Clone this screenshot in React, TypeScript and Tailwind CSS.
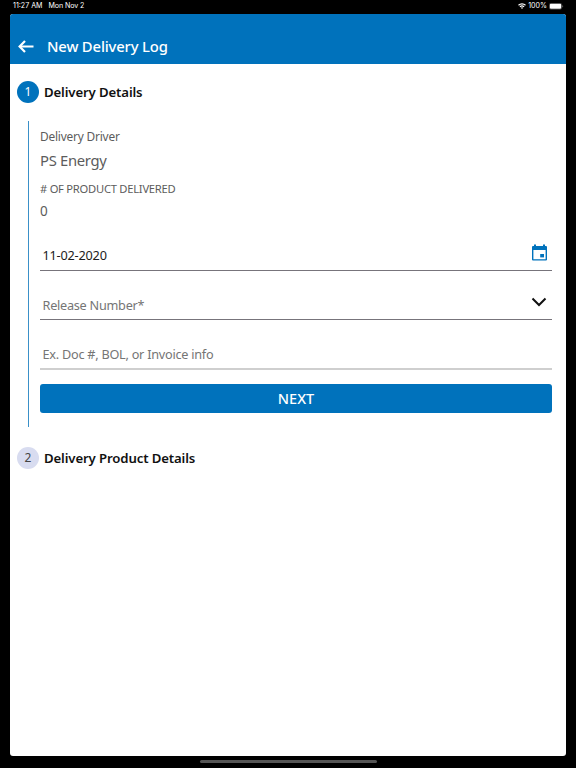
import React from 'react';

function StatusBar() {
  return (
    <div className="flex h-[14px] items-start justify-between pl-[13px] pr-[12px] pt-[1px] font-['Inter','Liberation_Sans',sans-serif] text-[7.1px] leading-[10px] text-white">
      <div className="flex gap-[6px]">
        <span>11:27 AM</span>
        <span className="tracking-[-0.1px]">Mon Nov 2</span>
      </div>
      <div className="flex items-center">
        <svg width="8" height="6" viewBox="0 0 16 12" fill="none" stroke="white" strokeWidth="2.3">
          <path d="M1 4.5a10 10 0 0 1 14 0" />
          <path d="M3.8 7.6a6 6 0 0 1 8.4 0" />
          <path d="M8 11.8L5.8 9.6a3.1 3.1 0 0 1 4.4 0z" fill="white" stroke="none" />
        </svg>
        <span className="ml-[2px]">100%</span>
        <svg className="ml-[2px]" width="15" height="7" viewBox="0 0 15 7">
          <rect x="0.25" y="0.25" width="12.5" height="6" rx="1.7" fill="none" stroke="#777" strokeWidth="0.5" />
          <rect x="0.8" y="0.8" width="11.4" height="4.9" rx="1.2" fill="white" />
          <path d="M13.5 2.2v2.1c0.9-0.4 0.9-1.7 0-2.1z" fill="#888" />
        </svg>
      </div>
    </div>
  );
}

function Header() {
  return (
    <header className="flex h-[50px] items-start bg-[#0072bc] pl-[8px] text-white">
      <svg className="mt-[26px]" width="16" height="13" viewBox="0 0 16 13" fill="none" stroke="white" strokeWidth="2.2">
        <path d="M15.5 6.5H2" />
        <path d="M7 0.9L1.6 6.5L7 12.1" />
      </svg>
      <h1 className="ml-[13px] mt-[21px] text-[14.8px] font-medium leading-[22px] tracking-[-0.15px]">New Delivery Log</h1>
    </header>
  );
}

interface StepTitleProps {
  number: number;
  title: string;
  active?: boolean;
}

function StepTitle({ number, title, active }: StepTitleProps) {
  return (
    <div className="flex h-[22px] items-center pl-[7px]">
      <span
        className={`flex h-[22px] w-[22px] items-center justify-center rounded-full text-[12px] ${
          active ? 'bg-[#0072bc] text-white' : 'bg-[#d8dcf0] text-[#444]'
        }`}
      >
        {number}
      </span>
      <h2 className="ml-[5px] text-[13.2px] font-semibold leading-[20px] tracking-[-0.13px] text-[#111]">{title}</h2>
    </div>
  );
}

export default function App() {
  return (
    <div className="flex h-[768px] w-[576px] flex-col overflow-hidden whitespace-nowrap bg-black font-['Noto_Sans','Open_Sans',sans-serif]">
      <StatusBar />
      <main className="mx-[10px] h-[742px] overflow-hidden rounded-[3px] bg-white">
        <Header />
        <div className="pt-[17px]">
          <StepTitle number={1} title="Delivery Details" active />
          <section className="ml-[18px] mr-[14px] mt-[18px] h-[306px] border-l border-[#3a90c8] pl-[11px] text-[#5c5c5c]">
            <p className="pt-[7px] text-[11.9px] leading-[17px] tracking-[-0.2px]">Delivery Driver</p>
            <p className="mt-[5px] text-[14.8px] leading-[20px] tracking-[-0.3px]">PS Energy</p>
            <p className="mt-[11px] text-[11.2px] leading-[16px] tracking-[-0.25px]"># OF PRODUCT DELIVERED</p>
            <p className="mt-[5px] text-[13.5px] leading-[18px]">0</p>

            <div className="mt-[18px] flex h-[33px] justify-between border-b border-[#77747b] pl-[2.5px] pr-[4px]">
              <span className="mt-[8px] text-[12.7px] leading-[18px] tracking-[-0.2px] text-[#1c1c1c]">11-02-2020</span>
              <svg className="mt-[6px]" width="17" height="18" viewBox="0 0 17 18">
                <path d="M1 3a1 1 0 0 1 1-1h1V0.5h2V2h7V0.5h2V2h1a1 1 0 0 1 1 1v12.5a1 1 0 0 1-1 1H2a1 1 0 0 1-1-1zM2.4 6v9.2h12.2V6z" fill="#0072bc" fillRule="evenodd" />
                <rect x="9.2" y="10" width="3.8" height="3.4" fill="#0072bc" />
              </svg>
            </div>
            <div className="mt-[16px] flex h-[33px] justify-between border-b border-[#77747b] pl-[2.5px] pr-[5px]">
              <span className="mt-[9px] text-[12.7px] leading-[18px] tracking-[-0.26px] text-[#757575]">Release Number*</span>
              <svg className="mt-[10px]" width="16" height="10" viewBox="0 0 16 10" fill="none" stroke="#111" strokeWidth="2">
                <path d="M1.5 1.5L8 8l6.5-6.5" />
              </svg>
            </div>
            <div className="mt-[16px] flex h-[34px] border-b-2 border-[#cfcfcf] pl-[2.5px]">
              <span className="mt-[9px] text-[12.7px] leading-[18px] tracking-[-0.25px] text-[#757575]">Ex. Doc #, BOL, or Invoice info</span>
            </div>
            <button className="mt-[14px] flex h-[29px] w-full items-center justify-center rounded-[3px] bg-[#0072bc] text-[14.5px] font-medium text-white">
              NEXT
            </button>
          </section>
          <div className="mt-[20px]">
            <StepTitle number={2} title="Delivery Product Details" />
          </div>
        </div>
      </main>
      <div className="mx-auto mt-[4px] h-[3px] w-[177px] rounded-full bg-[#555]" />
    </div>
  );
}
